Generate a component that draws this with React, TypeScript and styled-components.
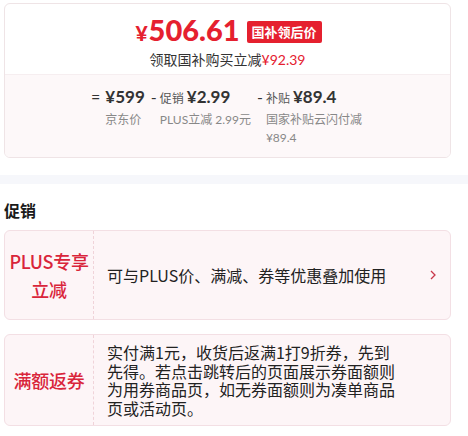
import React from "react";
import styled, { createGlobalStyle } from "styled-components";

const GlobalStyle = createGlobalStyle`
  html, body {
    margin: 0;
    padding: 0;
    background: #ffffff;
  }
  body {
    font-family: "Lato", "Noto Sans CJK SC", sans-serif;
    color: #222222;
  }
`;

const RED = "#e5202f";

type Part = { op: string, tag?: string, amount: string, note: string, narrow?: boolean };

const parts: Part[] = [
	{ op: "=", amount: "¥599", note: "京东价" },
	{ op: "-", tag: "促销", amount: "¥2.99", note: "PLUS立减 2.99元" },
	{ op: "-", tag: "补贴", amount: "¥89.4", note: "国家补贴云闪付减¥89.4", narrow: true }
];

type Promo = { label: string, text: string, arrow?: boolean };

const promos: Promo[] = [
	{ label: "PLUS专享立减", text: "可与PLUS价、满减、券等优惠叠加使用", arrow: true },
	{
		label: "满额返券",
		text: "实付满1元，收货后返满1打9折券，先到先得。若点击跳转后的页面展示券面额则为用券商品页，如无券面额则为凑单商品页或活动页。"
	}
];

const App = () => {
	return (
		<>
			<GlobalStyle />
			<Inner>
				<PriceCard>
					<PriceTop>
						<PriceLine>
							<Price><Yen>¥</Yen>506.61</Price>
							<Badge>国补领后价</Badge>
						</PriceLine>
						<SubLine>领取国补购买立减<em>¥92.39</em></SubLine>
					</PriceTop>
					<Breakdown>
						{parts.map((p) => (
							<Part key={p.note}>
								<Op wide={p.op === "="}>{p.op}</Op>
								<PartBody narrow={!!p.narrow}>
									<PartHead>
										{p.tag && <Tag>{p.tag}</Tag>}
										<Amount>{p.amount}</Amount>
									</PartHead>
									<Note>{p.note}</Note>
								</PartBody>
							</Part>
						))}
					</Breakdown>
				</PriceCard>
			</Inner>
			<Band />
			<Inner>
				<SectionTitle>促销</SectionTitle>
				<PromoList>
					{promos.map((p) => (
						<PromoCard key={p.label}>
							<PromoLabel>{p.label}</PromoLabel>
							<PromoText>{p.text}</PromoText>
							<ArrowSlot>
								{p.arrow && (
									<svg viewBox="0 0 6 10" width="6" height="10">
										<path d="M1 1 L5 5 L1 9" fill="none" stroke="#c8374a" strokeWidth="1.3" />
									</svg>
								)}
							</ArrowSlot>
						</PromoCard>
					))}
				</PromoList>
			</Inner>
		</>
	);
};

const Inner = styled.div`
	padding: 0 17px 0 4px;
	&:first-of-type {
		padding-top: 3px;
	}
`;

const PriceCard = styled.div`
	border: 1px solid #efe4e6;
	border-radius: 6px;
	overflow: hidden;
`;

const PriceTop = styled.div`
	height: 71px;
	display: flex;
	flex-direction: column;
	align-items: center;
	padding-top: 8px;
	box-sizing: border-box;
	border-bottom: 1px solid #f6eef0;
`;

const PriceLine = styled.div`
	display: flex;
	align-items: center;
	height: 38px;
	margin-left: 2px;
`;

const Price = styled.div`
	color: ${RED};
	font-size: 29px;
	font-weight: 900;
	line-height: 38px;
`;

const Yen = styled.span`
	font-size: 21px;
	margin-right: 1px;
`;

const Badge = styled.span`
	margin-left: 7px;
	margin-top: 2px;
	height: 22px;
	line-height: 22px;
	padding: 0 5px;
	background: ${RED};
	color: #ffffff;
	font-size: 13px;
	font-weight: 700;
	border-radius: 2px;
	font-family: "Noto Sans CJK SC", sans-serif;
`;

const SubLine = styled.div`
	font-size: 14px;
	line-height: 18px;
	color: #333333;
	font-family: "Noto Sans CJK SC", sans-serif;
	em {
		font-style: normal;
		color: ${RED};
		font-family: "Lato", sans-serif;
	}
`;

const Breakdown = styled.div`
	background: #fdf8f9;
	display: flex;
	justify-content: center;
	gap: 6px;
	padding: 10px 0 9px;
	min-height: 82px;
	box-sizing: border-box;
`;

const Part = styled.div`
	display: flex;
	align-items: flex-start;
`;

const Op = styled.span<{ wide: boolean }>`
	font-size: 16px;
	line-height: 24px;
	color: #333333;
	margin-right: ${props => props.wide ? "5px" : "3px"};
`;

const PartBody = styled.div<{ narrow: boolean }>`
	display: flex;
	flex-direction: column;
	max-width: ${props => props.narrow ? "98px" : "none"};
`;

const PartHead = styled.div`
	display: flex;
	align-items: baseline;
	height: 24px;
	line-height: 24px;
`;

const Tag = styled.span`
	font-size: 12px;
	color: #555555;
	margin-right: 3px;
	font-family: "Noto Sans CJK SC", sans-serif;
`;

const Amount = styled.span`
	font-size: 17px;
	font-weight: 700;
	color: #333333;
`;

const Note = styled.div`
	font-size: 12px;
	line-height: 18px;
	color: #888888;
	margin-top: 2px;
`;

const Band = styled.div`
	height: 9px;
	background: #f6f7fb;
	margin-top: 17px;
`;

const SectionTitle = styled.h2`
	margin: 0;
	padding-top: 16px;
	font-size: 16px;
	line-height: 20px;
	font-weight: 700;
	color: #1a1a1a;
	font-family: "Noto Sans CJK SC", sans-serif;
`;

const PromoList = styled.div`
	display: flex;
	flex-direction: column;
	gap: 14px;
	margin-top: 10px;
`;

const PromoCard = styled.div`
	display: flex;
	align-items: center;
	min-height: 90px;
	box-sizing: border-box;
	background: #fdf5f7;
	border: 1px solid #f3dfe4;
	border-radius: 6px;
	font-family: "Noto Sans CJK SC", sans-serif;
`;

const PromoLabel = styled.div`
	align-self: stretch;
	width: 89px;
	flex-shrink: 0;
	display: flex;
	align-items: center;
	justify-content: center;
	text-align: center;
	box-sizing: border-box;
	border-right: 1px dashed #f0d3d9;
	color: #d9253b;
	font-size: 18px;
	font-weight: 500;
	line-height: 28px;
	letter-spacing: -0.3px;
`;

const PromoText = styled.div`
	flex: 1;
	padding: 8px 33px 8px 13px;
	font-size: 16px;
	line-height: 18.5px;
	color: #222222;
`;

const ArrowSlot = styled.div`
	width: 6px;
	flex-shrink: 0;
	margin-right: 14px;
	display: flex;
	align-items: center;
`;

export default App;
